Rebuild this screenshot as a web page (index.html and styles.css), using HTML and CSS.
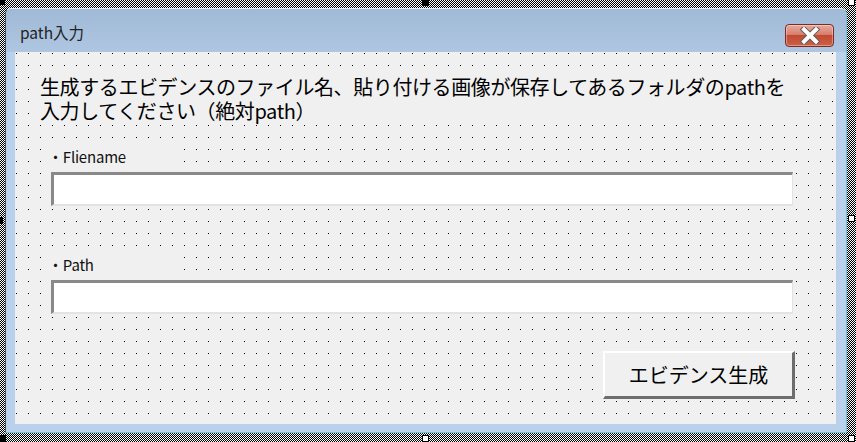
FILE: index.html
```html
<!DOCTYPE html>
<html lang="ja">

<head>
    <meta charset="UTF-8">
    <meta name="viewport" content="width=device-width, initial-scale=1.0">
    <title>path入力</title>
    <link rel="stylesheet" href="styles.css">
</head>

<body>
    <div class="designer">
        <div class="window">
            <div class="titlebar">
                <span class="title">path入力</span>
                <button class="close-btn" type="button" aria-label="閉じる">
                    <svg width="22" height="17" viewBox="0 0 22 17">
                        <path d="M5 2.5 L17 14.5 M17 2.5 L5 14.5" stroke="#5b5b5b" stroke-width="6" stroke-linecap="square" fill="none" />
                        <path d="M5 2.5 L17 14.5 M17 2.5 L5 14.5" stroke="#fff" stroke-width="4" stroke-linecap="square" fill="none" />
                    </svg>
                </button>
            </div>
            <div class="client">
                <div class="prompt">生成するエビデンスのファイル名、貼り付ける画像が保存してあるフォルダのpathを<br>入力してください（絶対path）</div>
                <div class="field-label">・Fliename</div>
                <div class="textbox"></div>
                <div class="field-label second">・Path</div>
                <div class="textbox"></div>
                <div class="actions">
                    <button class="action-btn" type="button">エビデンス生成</button>
                </div>
            </div>
        </div>

        <!-- サイズ変更ハンドル -->
        <span class="handle h-tl filled"></span>
        <span class="handle h-tm filled"></span>
        <span class="handle h-tr"></span>
        <span class="handle h-ml filled"></span>
        <span class="handle h-mr"></span>
        <span class="handle h-bl filled"></span>
        <span class="handle h-bm"></span>
        <span class="handle h-br"></span>
    </div>
</body>

</html>
```

FILE: styles.css
```css
* {
    margin: 0;
    padding: 0;
    box-sizing: border-box;
}

body {
    width: 856px;
    height: 442px;
    overflow: hidden;
    font-family: "Noto Sans CJK JP", "Noto Sans", sans-serif;
    background-color: #fff;
}

.designer {
    position: relative;
    width: 856px;
    height: 442px;
    padding: 8px 9px 9px 5px;
    background: repeating-conic-gradient(#000 0 25%, #fff 0 50%) 0 0 / 2px 2px;
}

.window {
    display: flex;
    flex-direction: column;
    height: 100%;
    background-color: #b9d1ea;
    border-left: 1px solid #44505e;
    border-right: 1px solid #5fc6dd;
    border-bottom: 1px solid #5fc6dd;
    border-top: 1px solid #e8eef6;
    border-radius: 6px 6px 0 0;
    padding: 0 10px 8px 9px;
}

.titlebar {
    display: flex;
    align-items: center;
    justify-content: space-between;
    height: 43px;
    margin: 0 -10px 0 -9px;
    padding: 9px 12px 0 14px;
    background: linear-gradient(#a0b9d6, #aec6e1);
    border-radius: 5px 5px 0 0;
}

.title {
    margin-top: -6px;
    font-size: 15.5px;
    color: #222;
}

.close-btn {
    display: flex;
    align-items: center;
    justify-content: center;
    width: 49px;
    height: 23px;
    border: 1px solid #7d2a1f;
    border-radius: 4px;
    background: linear-gradient(#e7a99c 0, #d7806d 45%, #c24a33 50%, #cd5f45 100%);
    box-shadow: inset 0 0 0 1px rgba(255, 255, 255, 0.35);
}

.client {
    flex: 1;
    position: relative;
    padding: 23px 0 0 25px;
    background-color: #f0f0f0;
    background-image: conic-gradient(from 270deg at 1px 1px, #000 25%, transparent 0);
    background-size: 12px 12px;
    background-position: 1px 1px;
}

.prompt {
    width: 760px;
    font-size: 20px;
    line-height: 24px;
    color: #000;
    background-color: #f0f0f0;
    letter-spacing: -0.4px;
}

.field-label {
    width: 136px;
    margin: 24px 0 0 8px;
    font-size: 15px;
    line-height: 20px;
    letter-spacing: -0.2px;
    color: #111;
    background-color: #f0f0f0;
}

.field-label.second {
    margin-top: 49px;
}

.textbox {
    width: 742px;
    height: 34px;
    margin: 5px 0 0 11px;
    background-color: #fff;
    border-style: solid;
    border-width: 3px 1px 2px 3px;
    border-color: #898989 #e3e3e3 #e3e3e3 #898989;
}

.actions {
    display: flex;
    justify-content: flex-end;
    width: 755px;
    margin-top: 37px;
}

.action-btn {
    width: 192px;
    height: 48px;
    font-family: "Noto Sans CJK JP", sans-serif;
    font-size: 20px;
    color: #000;
    background-color: #f0f0f0;
    border-style: solid;
    border-width: 2px 3px 3px 2px;
    border-color: #fff #6d6d6d #6d6d6d #fff;
}

.handle {
    position: absolute;
    width: 7px;
    height: 7px;
    background-color: #fff;
    border: 1px solid #000;
}

.handle.filled {
    background-color: #000;
}

.h-tl { left: -2px; top: -2px; }
.h-tm { left: 422px; top: -1px; }
.h-tr { left: 848px; top: -1px; }
.h-ml { left: -4px; top: 217px; }
.h-mr { left: 848px; top: 215px; }
.h-bl { left: -1px; top: 435px; }
.h-bm { left: 422px; top: 435px; }
.h-br { left: 848px; top: 435px; }
```
